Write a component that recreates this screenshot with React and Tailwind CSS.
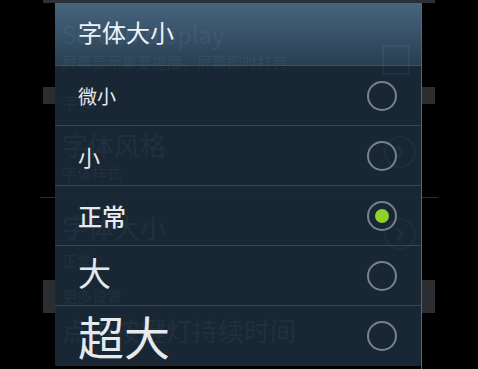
import { ChevronRight } from "lucide-react";

const sizes = [
  { label: "微小", cls: "text-[19px]", checked: false },
  { label: "小", cls: "text-[22px]", checked: false },
  { label: "正常", cls: "text-[24px] font-medium", checked: true },
  { label: "大", cls: "text-[33px] -mt-[6px]", checked: false },
  { label: "超大", cls: "text-[46px] -mt-[2px]", checked: false },
];

function Radio({ checked }) {
  return (
    <div className="w-[30px] h-[30px] rounded-full border-2 border-[#76838e] flex items-center justify-center">
      {checked && <div className="w-[14px] h-[14px] rounded-full bg-[#8fd12a]" />}
    </div>
  );
}

export default function App() {
  return (
    <div
      className="relative w-[478px] h-[369px] bg-black overflow-hidden"
      style={{ fontFamily: '"Noto Sans CJK SC", "Noto Sans", sans-serif' }}
    >
      {/* settings page behind the dialog */}
      <div className="absolute inset-0 text-[#6b7c8a]">
        <div className="mx-[43px] h-[3px] bg-[#2a3036]" />
        <div className="pl-[62px] pr-[68px] pt-[16px] flex justify-between">
          <div>
            <div className="text-[24px] leading-[30px]">Screen display</div>
            <div className="text-[15px] leading-[18px] mt-[4px]">屏幕显示重要提醒，屏幕即时打亮</div>
          </div>
          <div className="w-[28px] h-[30px] border-2 border-[#6b7c8a] mt-[26px]" />
        </div>
        <div className="flex justify-between mt-[12px]">
          <div className="ml-[43px] w-[13px] h-[17px] bg-[#2a2e32]" />
          <div className="mr-[43px] w-[14px] h-[17px] bg-[#2a2e32]" />
        </div>
        <div className="pl-[62px] text-[16px] -mt-[14px]">字体</div>
        <div className="pl-[62px] pr-[62px] flex justify-between items-center mt-[6px]">
          <div className="text-[26px]">字体风格</div>
          <div className="w-[32px] h-[32px] rounded-full border-2 border-[#4d5f70] flex items-center justify-center mt-[16px]">
            <ChevronRight size={20} strokeWidth={3} />
          </div>
        </div>
        <div className="pl-[62px] text-[15px] -mt-[6px]">字体样式</div>
        <div className="mx-[40px] h-px bg-[#24303a] mt-[12px]" />
        <div className="pl-[62px] pr-[62px] flex justify-between items-center mt-[6px]">
          <div className="text-[26px]">字体大小</div>
          <div className="w-[32px] h-[32px] rounded-full border-2 border-[#4d5f70] flex items-center justify-center mt-[14px]">
            <ChevronRight size={20} strokeWidth={3} />
          </div>
        </div>
        <div className="pl-[62px] text-[15px]">正常</div>
        <div className="flex justify-between mt-[8px]">
          <div className="ml-[43px] w-[13px] h-[33px] bg-[#2a2e32]" />
          <div className="mr-[43px] w-[14px] h-[33px] bg-[#2a2e32]" />
        </div>
        <div className="pl-[62px] text-[15px] -mt-[28px]">更多设置</div>
        <div className="pl-[62px] text-[26px] mt-[2px]">点击按键灯持续时间</div>
      </div>

      {/* dialog */}
      <div className="absolute left-[55px] top-[3px] w-[367px] h-[370px] flex flex-col border-r border-[#55687a]">
        <div className="h-[63px] flex items-center pl-[23px] bg-gradient-to-b from-[#4c6d89]/[0.93] to-[#2c4457]/[0.93] border-b border-[#3e5468]">
          <span className="text-[24px] text-[#eef2f5] -mt-[4px]">字体大小</span>
        </div>
        {sizes.map((s, i) => (
          <div
            key={s.label}
            className={`h-[60px] flex items-center justify-between pl-[23px] pr-[24px] bg-[#1b2a38]/[0.93] ${i < sizes.length - 1 ? "border-b border-[#33475a]" : ""}`}
          >
            <span className={`${s.cls} text-[#e6eaee] leading-none`}>{s.label}</span>
            <Radio checked={s.checked} />
          </div>
        ))}
      </div>
    </div>
  );
}
